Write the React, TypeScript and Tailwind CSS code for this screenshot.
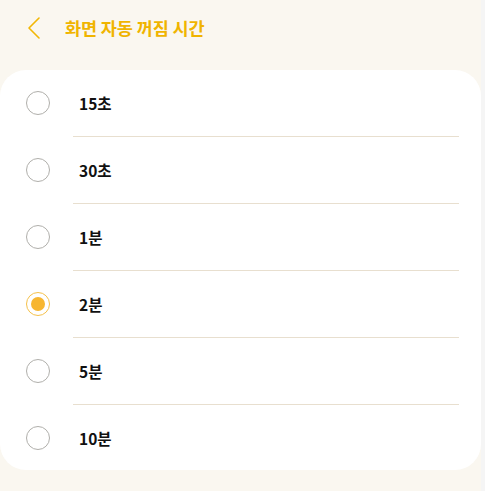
import React from "react";

const items = ["15초", "30초", "1분", "2분", "5분", "10분"];

export default function App() {
  const selected = 3;
  return (
    <div
      className="w-[485px] h-[491px] bg-[#faf7f0] flex overflow-hidden"
      style={{ fontFamily: '"Noto Sans CJK KR", "Noto Sans", sans-serif' }}
    >
      <div className="w-[481px] flex flex-col">
        <div className="h-[70px] flex items-start pt-[16px]">
          <div className="w-[65px] pl-[27px] pt-[1px]">
            <svg width="14" height="22" viewBox="0 0 14 22" fill="none">
              <path d="M12 1 L2 11 L12 21" stroke="#f2b705" strokeWidth="1.6" strokeLinecap="round" strokeLinejoin="round" />
            </svg>
          </div>
          <div className="text-[17.5px] font-bold text-[#f0b400] leading-[24px] tracking-[-0.1px]">화면 자동 꺼짐 시간</div>
        </div>
        <div className="bg-white rounded-[26px] h-[400px] flex flex-col">
          {items.map((label, i) => (
            <div key={label} className="flex flex-col">
              <div className="h-[66px] flex items-center">
                <div className="w-[79px] pl-[26px] flex items-center">
                  {i === selected ? (
                    <div className="w-[24px] h-[24px] rounded-full border-[1.5px] border-[#f5c14a] flex items-center justify-center">
                      <div className="w-[14px] h-[14px] rounded-full bg-[#f7b62f]" />
                    </div>
                  ) : (
                    <div className="w-[24px] h-[24px] rounded-full border-[1.5px] border-[#b0afab]" />
                  )}
                </div>
                <div className="text-[15.5px] font-bold text-[#111] leading-[20px]">{label}</div>
              </div>
              {i < items.length - 1 && (
                <div className="ml-[73px] mr-[22px] h-[1px] bg-[#e8dfcf]" />
              )}
            </div>
          ))}
        </div>
      </div>
      <div className="w-[4px] bg-[#f5f5f5]" />
    </div>
  );
}
